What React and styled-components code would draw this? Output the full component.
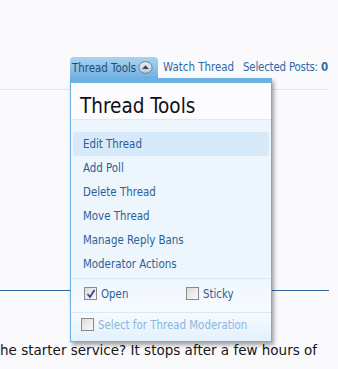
import React from 'react';
import styled, { createGlobalStyle } from 'styled-components';

const Global = createGlobalStyle`
  body {
    margin: 0;
    background: #fafafd;
    font-family: "DejaVu Sans Condensed", "DejaVu Sans", sans-serif;
  }
`;

const Page = styled.div`
  width: 338px;
  height: 369px;
  overflow: hidden;
  padding-top: 57px;
  box-sizing: border-box;
`;

const Nav = styled.div`
  display: flex;
  align-items: flex-end;
  padding-left: 70px;
  height: 21px;
  font-size: 11.4px;
`;

const TabWrap = styled.div`
  position: relative;
  align-self: stretch;
`;

const Tab = styled.div`
  height: 21px;
  display: flex;
  align-items: center;
  gap: 2px;
  padding: 0 5px 0 2px;
  border-radius: 4px 4px 0 0;
  background: linear-gradient(#acd3f0, #6fb1e3);
  color: #274a6f;
`;

const Link = styled.span`
  color: #2b6aa8;
  padding: 0 0 0 ${p => p.$gap}px;
  letter-spacing: ${p => p.$track || 0}px;
  line-height: 21px;
  white-space: nowrap;
  & b { font-weight: bold; }
`;

const Arrow = styled.svg`
  width: 15px;
  height: 13px;
  display: block;
`;

const Rule = styled.div`
  margin: ${p => p.$top}px 9px 0 0;
  border-top: 1px solid ${p => p.$color};
`;

const Content = styled.p`
  margin: 51px 0 0;
  font-family: "DejaVu Sans", sans-serif;
  font-size: 13.5px;
  color: #161616;
  white-space: nowrap;
`;

const Menu = styled.div`
  position: absolute;
  top: 100%;
  left: 0;
  width: 200px;
  border: 1px solid #6cb0e3;
  border-top: 5px solid #6fb1e3;
  background: #eef6fd;
  box-shadow: 2px 3px 4px rgba(0, 0, 0, 0.35);
  z-index: 2;
`;

const MenuHead = styled.h3`
  margin: 0;
  padding: 12px 9px 2px;
  height: 22px;
  font-weight: normal;
  font-size: 20.5px;
  line-height: 22px;
  color: #111;
  background: #fcfcff;
  border-bottom: 1px solid #d7eafa;
`;

const List = styled.ul`
  list-style: none;
  margin: 0;
  padding: 12px 2px 2px;
  border-bottom: 1px solid #d7eafa;
`;

const Item = styled.li`
  height: 24px;
  line-height: 24px;
  padding-left: 10px;
  font-size: 11.4px;
  color: #2c5e97;
  border-radius: 4px;
  background: ${p => (p.$active ? '#d6eafa' : 'transparent')};
`;

const CheckRow = styled.div`
  display: grid;
  grid-template-columns: 102px 1fr;
  padding: 8px 12px 12px 13px;
  background: linear-gradient(#eef6fd, #f8fbff);
  border-bottom: 1px solid #d7eafa;
  font-size: 11.4px;
  color: #2c5e97;
`;

const Label = styled.label`
  display: flex;
  align-items: center;
  gap: 4px;
  height: 13px;
  color: ${p => p.$color || 'inherit'};
`;

const Box = styled.span`
  width: 11px;
  height: 11px;
  border: 1px solid #8a8a8a;
  background: linear-gradient(135deg, #dcdcdc, #fafafa);
  display: inline-flex;
  align-items: center;
  justify-content: center;
  flex: none;
`;

const Foot = styled.div`
  padding: 5px 10px 10px;
  height: 13px;
  background: linear-gradient(#f6fbff, #e2f0fc);
  font-size: 11.4px;
`;

const Check = () => (
  <svg width="10" height="10" viewBox="0 0 10 10">
    <path d="M1.5 5 L4 8 L8.5 1" fill="none" stroke="#33479a" strokeWidth="1.8" />
  </svg>
);

const CheckBox = ({ checked }) => <Box>{checked && <Check />}</Box>;

const items = ['Edit Thread', 'Add Poll', 'Delete Thread', 'Move Thread', 'Manage Reply Bans', 'Moderator Actions'];

export default function App() {
  return (
    <Page>
      <Global />
      <Nav>
        <TabWrap>
          <Tab>
            Thread Tools
            <Arrow viewBox="0 0 15 13">
              <defs>
                <linearGradient id="ag" x1="0" y1="0" x2="0" y2="1">
                  <stop offset="0" stopColor="#e8eef5" />
                  <stop offset="1" stopColor="#b9c9da" />
                </linearGradient>
              </defs>
              <ellipse cx="7.5" cy="6.5" rx="6.6" ry="5.9" fill="url(#ag)" stroke="#6f7f90" strokeWidth="1" />
              <path d="M4.2 8.1 L7.5 4.2 L10.8 8.1 Z" fill="#3e4650" />
            </Arrow>
          </Tab>
          <Menu>
            <MenuHead>Thread Tools</MenuHead>
            <List>
              {items.map((t, i) => (
                <Item key={t} $active={i === 0}>{t}</Item>
              ))}
            </List>
            <CheckRow>
              <Label><CheckBox checked />Open</Label>
              <Label><CheckBox />Sticky</Label>
            </CheckRow>
            <Foot>
              <Label $color="#8ab6e0"><CheckBox />Select for Thread Moderation</Label>
            </Foot>
          </Menu>
        </TabWrap>
        <Link $gap={5}>Watch Thread</Link>
        <Link $gap={9} $track={-0.2}>Selected Posts: <b>0</b></Link>
      </Nav>
      <Rule $top={11} $color="#dce8f4" />
      <Rule $top={200} $color="#2e679e" />
      <Content>he starter service? It stops after a few hours of</Content>
    </Page>
  );
}
